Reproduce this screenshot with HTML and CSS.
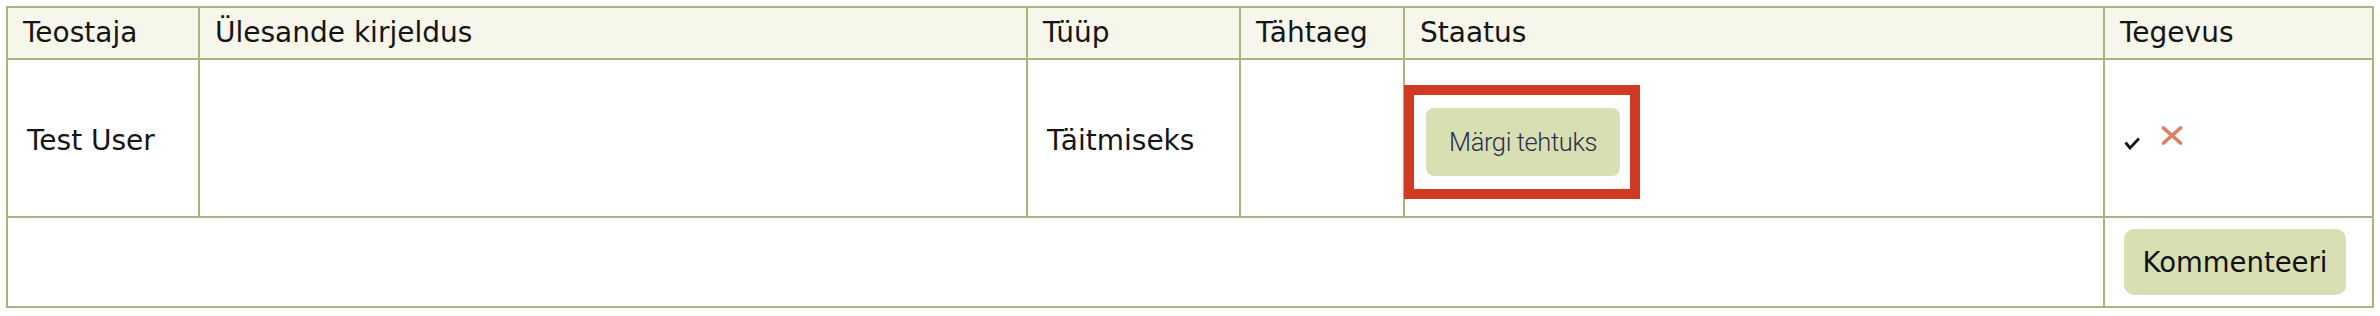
FILE: index.html
```html
<!DOCTYPE html>
<html lang="et">
<head>
<meta charset="utf-8">
<title>Ülesanded</title>
<link rel="stylesheet" href="styles.css">
</head>
<body>
<table class="tasks">
  <colgroup>
    <col class="c-doer">
    <col class="c-desc">
    <col class="c-type">
    <col class="c-due">
    <col class="c-status">
    <col class="c-action">
  </colgroup>
  <thead>
    <tr>
      <th>Teostaja</th>
      <th>Ülesande kirjeldus</th>
      <th>Tüüp</th>
      <th>Tähtaeg</th>
      <th>Staatus</th>
      <th>Tegevus</th>
    </tr>
  </thead>
  <tbody>
    <tr class="task-row">
      <td>Test User</td>
      <td></td>
      <td>Täitmiseks</td>
      <td></td>
      <td class="status-cell">
        <div class="highlight">
          <button class="btn-done" type="button">Märgi tehtuks</button>
        </div>
      </td>
      <td class="action-cell">
        <div class="icons">
          <svg class="ico-check" width="16" height="13" viewBox="0 0 16 13" aria-hidden="true">
            <path d="M1.5 5.5 L6 11 L15 1.5" fill="none" stroke="#151515" stroke-width="2.8" stroke-linejoin="miter" stroke-linecap="butt"/>
          </svg>
          <svg class="ico-x" width="22" height="19" viewBox="0 0 22 19" aria-hidden="true">
            <path d="M2.5 2 L19.5 17 M19.5 2 L2.5 17" fill="none" stroke="#e07c5d" stroke-width="3.6" stroke-linecap="round"/>
          </svg>
        </div>
      </td>
    </tr>
    <tr class="foot-row">
      <td colspan="5"></td>
      <td class="comment-cell"><button class="btn-comment" type="button">Kommenteeri</button></td>
    </tr>
  </tbody>
</table>
</body>
</html>
```

FILE: styles.css
```css
html, body {
  margin: 0;
  padding: 0;
  background: #ffffff;
}

body {
  padding: 6px 0 0 6px;
  font-family: "DejaVu Sans", Verdana, sans-serif;
  color: #151515;
}

.tasks {
  border-collapse: collapse;
  table-layout: fixed;
  width: 2366px;
  font-size: 28px;
}

.c-doer { width: 192px; }
.c-desc { width: 828px; }
.c-type { width: 213px; }
.c-due { width: 164px; }
.c-status { width: 700px; }
.c-action { width: 269px; }

.tasks th,
.tasks td {
  border: 2px solid #abb37e;
  text-align: left;
}

.tasks th {
  background: #f6f7ea;
  font-weight: normal;
  line-height: 32px;
  padding: 9px 15px 9px 15px;
  height: 32px;
}

.task-row td {
  height: 148px;
  padding: 6px 19px 0 19px;
  vertical-align: middle;
  line-height: 32px;
}

.task-row td.status-cell {
  padding: 8px 0 0 0;
}

.highlight {
  display: inline-block;
  margin-left: -1px;
  border: 10px solid #d13a22;
  padding: 13px 10px 13px 12px;
  background: #ffffff;
}

.btn-done {
  display: block;
  width: 194px;
  height: 68px;
  border: none;
  border-radius: 8px;
  background: #d8dfb2;
  color: #2a2f4c;
  font-family: Roboto, "Liberation Sans", sans-serif;
  font-weight: 300;
  font-size: 25.5px;
  letter-spacing: -0.4px;
  padding: 0;
}

.task-row td.action-cell {
  padding: 0 0 0 19px;
}

.icons {
  display: flex;
  align-items: flex-start;
  gap: 21px;
}

.ico-check {
  margin-top: 11px;
}

.foot-row td {
  height: 88px;
  padding: 0;
}

.foot-row td.comment-cell {
  padding: 0 0 0 19px;
  vertical-align: middle;
}

.btn-comment {
  display: block;
  width: 222px;
  height: 66px;
  border: none;
  border-radius: 10px;
  background: #d8dfb2;
  color: #111111;
  font-family: "DejaVu Sans", Verdana, sans-serif;
  font-size: 27.5px;
  padding: 0;
}
```
